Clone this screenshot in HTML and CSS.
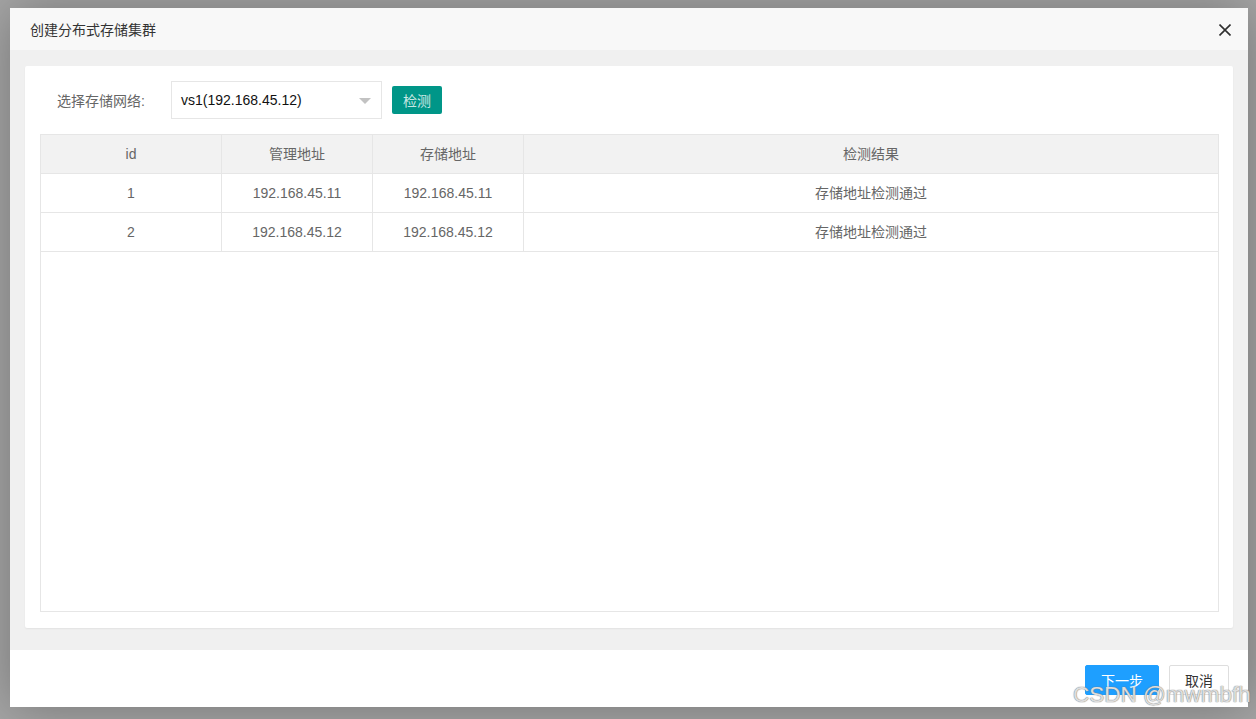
FILE: index.html
```html
<!DOCTYPE html>
<html lang="zh-CN">
<head>
<meta charset="utf-8">
<title>创建分布式存储集群</title>
<link rel="stylesheet" href="styles.css">
</head>
<body>
<div class="dialog">
  <div class="dlg-head">
    <span class="dlg-title">创建分布式存储集群</span>
    <span class="dlg-close">
      <svg width="12" height="12" viewBox="0 0 12 12"><path d="M0.5 0.5 L11.5 11.5 M11.5 0.5 L0.5 11.5" stroke="#2f2f2f" stroke-width="1.6" fill="none"/></svg>
    </span>
  </div>
  <div class="dlg-body">
    <div class="card">
      <div class="form-row">
        <label class="form-label">选择存储网络:</label>
        <div class="select">
          <span class="select-text">vs1(192.168.45.12)</span>
          <span class="select-arrow"></span>
        </div>
        <button class="btn-check">检测</button>
      </div>
      <div class="table-wrap">
        <table class="grid">
          <colgroup>
            <col class="c1"><col class="c2"><col class="c3"><col>
          </colgroup>
          <thead>
            <tr><th>id</th><th>管理地址</th><th>存储地址</th><th class="last">检测结果</th></tr>
          </thead>
          <tbody>
            <tr><td>1</td><td>192.168.45.11</td><td>192.168.45.11</td><td class="last">存储地址检测通过</td></tr>
            <tr><td>2</td><td>192.168.45.12</td><td>192.168.45.12</td><td class="last">存储地址检测通过</td></tr>
          </tbody>
        </table>
      </div>
    </div>
  </div>
  <div class="dlg-foot">
    <button class="btn btn-primary">下一步</button>
    <button class="btn btn-default">取消</button>
  </div>
  <div class="watermark">CSDN @mwmbfh</div>
</div>
</body>
</html>
```
FILE: styles.css
```css
html, body {
  margin: 0;
  padding: 0;
}
body {
  background: #a6a6a6;
  width: 1256px;
  height: 719px;
  overflow: hidden;
  padding: 8px 0 0 10px;
  box-sizing: border-box;
  font-family: "Liberation Sans", Arial, "Noto Sans CJK SC", sans-serif;
  font-size: 14px;
  color: #333;
}
.dialog {
  position: relative;
  width: 1238px;
  height: 699px;
  background: #fff;
  box-shadow: 1px 1px 50px rgba(0, 0, 0, 0.3);
  display: flex;
  flex-direction: column;
}
.dlg-head {
  height: 42px;
  background: #f8f8f8;
  display: flex;
  align-items: center;
  justify-content: space-between;
  padding: 0 17px 0 20px;
  flex: none;
}
.dlg-title {
  font-size: 14px;
  color: #333;
}
.dlg-close {
  display: flex;
  width: 12px;
  height: 12px;
  margin-top: 1px;
}
.dlg-body {
  background: #f0f0f0;
  height: 600px;
  padding: 16px 15px 22px 15px;
  box-sizing: border-box;
  flex: none;
}
.card {
  background: #fff;
  border-radius: 2px;
  box-shadow: 0 1px 2px rgba(0, 0, 0, 0.06);
  height: 562px;
  padding: 15px 14px 16px 15px;
  box-sizing: border-box;
  display: flex;
  flex-direction: column;
}
.form-row {
  display: flex;
  align-items: center;
  height: 38px;
  margin-bottom: 15px;
  flex: none;
}
.form-label {
  color: #666;
  margin-left: 17px;
  width: 114px;
}
.select {
  position: relative;
  width: 211px;
  height: 38px;
  border: 1px solid #e6e6e6;
  box-sizing: border-box;
  display: flex;
  align-items: center;
  padding-left: 9px;
}
.select-text {
  color: #111;
  font-size: 14px;
}
.select-arrow {
  position: absolute;
  right: 10px;
  top: 16px;
  width: 0;
  height: 0;
  border-left: 6px solid transparent;
  border-right: 6px solid transparent;
  border-top: 6px solid #c2c2c2;
}
.btn-check {
  margin-left: 10px;
  width: 50px;
  height: 28px;
  border: none;
  border-radius: 2px;
  background: #009688;
  color: rgba(255, 255, 255, 0.8);
  font-family: "Liberation Sans", Arial, "Noto Sans CJK SC", sans-serif;
  font-size: 14px;
  padding: 0;
}
.table-wrap {
  flex: none;
  height: 478px;
  border: 1px solid #e6e6e6;
  box-sizing: border-box;
}
.grid {
  width: 100%;
  table-layout: fixed;
  border-collapse: separate;
  border-spacing: 0;
  color: #666;
  font-size: 14px;
}
.grid col.c1 { width: 181px; }
.grid col.c2 { width: 151px; }
.grid col.c3 { width: 151px; }
.grid th, .grid td {
  height: 38px;
  padding: 0 15px;
  line-height: 20px;
  text-align: center;
  font-weight: normal;
  border-right: 1px solid #e6e6e6;
  border-bottom: 1px solid #e6e6e6;
  box-sizing: content-box;
}
.grid th {
  background: #f2f2f2;
}
.grid .last {
  border-right: none;
}
.dlg-foot {
  flex: 1;
  display: flex;
  justify-content: flex-end;
  align-items: flex-start;
  padding: 15px 19px 0 0;
  gap: 10px;
}
.btn {
  height: 30px;
  padding: 0 14px;
  border-radius: 2px;
  font-family: "Liberation Sans", Arial, "Noto Sans CJK SC", sans-serif;
  font-size: 14px;
  box-sizing: border-box;
}
.btn-primary {
  width: 74px;
  background: #1e9fff;
  border: 1px solid #1e9fff;
  color: #fff;
}
.btn-default {
  width: 60px;
  background: #fff;
  border: 1px solid #dedede;
  color: #333;
}
.watermark {
  position: absolute;
  left: 1063px;
  top: 674px;
  font-size: 22.5px;
  color: rgba(240, 240, 240, 0.85);
  text-shadow: 0 0 1px rgba(120, 120, 120, 0.9), 0 0 1px rgba(120, 120, 120, 0.9);
  white-space: nowrap;
  pointer-events: none;
}
```
